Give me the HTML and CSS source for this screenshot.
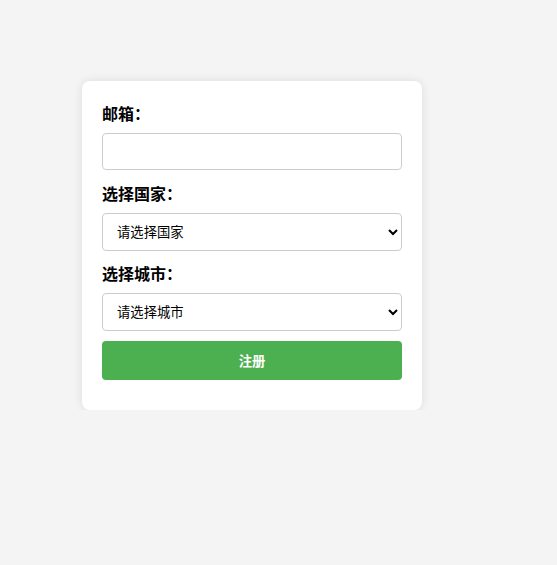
FILE: index.html
```html
<!DOCTYPE html>
<html lang="zh">
<head>
  <meta charset="UTF-8" />
  <title>注册</title>
  <link rel="stylesheet" href="styles.css">
</head>
<body>
  <form class="form-box">
    <label for="email">邮箱：</label>
    <input type="email" id="email">

    <label for="country">选择国家：</label>
    <select id="country">
      <option value="">请选择国家</option>
    </select>

    <label for="city">选择城市：</label>
    <select id="city">
      <option value="">请选择城市</option>
    </select>

    <button type="button">注册</button>
  </form>
</body>
</html>
```

FILE: styles.css
```css
body {
  margin: 0;
  padding: 81px 0 0 82px;
  background: #f4f4f4;
  font-family: "Liberation Sans", "Noto Sans CJK SC", sans-serif;
}
.form-box {
  width: 300px;
  padding: 20px;
  background: #fff;
  border-radius: 8px;
  box-shadow: 0 0 10px rgba(0, 0, 0, 0.1);
}
label {
  display: block;
  font-size: 16px;
  line-height: 28px;
  font-weight: bold;
  margin-bottom: 4px;
}
input, select {
  display: block;
  width: 100%;
  box-sizing: border-box;
  height: 37px;
  margin-bottom: 10px;
  padding: 0 10px;
  border: 1px solid #ccc;
  border-radius: 4px;
  font-size: 13.33px;
  font-family: inherit;
  background: #fff;
}
select { height: 38px; }
input { margin-bottom: 11px; }
button {
  display: block;
  width: 100%;
  height: 39px;
  margin-top: 2px;
  margin-bottom: 10px;
  border: none;
  border-radius: 4px;
  background: #4caf50;
  color: #fff;
  font-size: 13.33px;
  font-weight: bold;
  font-family: inherit;
}
```
